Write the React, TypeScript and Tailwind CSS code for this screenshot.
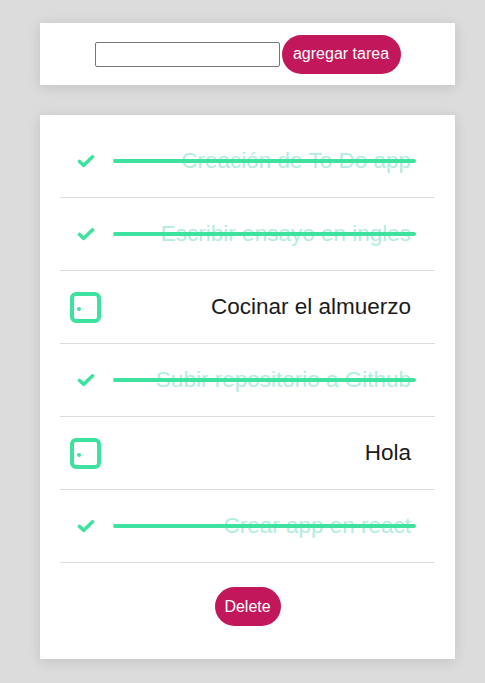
import React from 'react';

const tasks: { text: string, done: boolean }[] = [
  { text: 'Creación de To Do app', done: true },
  { text: 'Escribir ensayo en ingles', done: true },
  { text: 'Cocinar el almuerzo', done: false },
  { text: 'Subir repositorio a Github', done: true },
  { text: 'Hola', done: false },
  { text: 'Crear app en react', done: true },
]

const Check = () => (
  <svg width="18" height="14" viewBox="0 0 18 14" fill="none">
    <path d="M2.5 7.5 L6.8 11.3 L15.5 2.8" stroke="#3ee29f" strokeWidth="3.6" strokeLinecap="round" strokeLinejoin="round" />
  </svg>
)

const Box = () => (
  <div className="relative w-[31px] h-[31px] rounded-[6px] border-[4px] border-[#3ee29f]">
    <span className="absolute left-[3px] top-[11px] w-[4px] h-[4px] rounded-full bg-[#3ee29f]"></span>
  </div>
)

const App = () => {
  return (
    <div className="min-h-screen bg-[#dcdcdc] pt-[23px] pb-6 font-['Liberation_Sans',Arial,sans-serif]">
      <div className="ml-[40px] w-[415px] h-[62px] bg-white shadow-[0_2px_12px_rgba(0,0,0,0.12)] flex items-center justify-center gap-[2px]">
        <input type="text" className="w-[185px] h-[25px] border border-[#767676] rounded-[2px] bg-white" />
        <button className="w-[119px] h-[39px] rounded-full bg-[#c2185b] text-white text-[16px]">agregar tarea</button>
      </div>

      <div className="ml-[40px] w-[415px] mt-[30px] h-[544px] bg-white shadow-[0_2px_12px_rgba(0,0,0,0.12)] px-[20px] pt-[10px]">
        <ul>
          {tasks.map(({ text, done }, index: number) => (
            <li key={index + '' + text} className="h-[73px] border-b border-[#dddddd] flex items-center">
              <div className="w-[31px] ml-[10px] flex items-center justify-center">
                {done ? <Check /> : <Box />}
              </div>
              <div className="relative flex-1 h-full flex items-center justify-end pr-[24px]">
                <span className={done ? 'text-[22.5px] text-[#b3ece0]' : 'text-[22.5px] text-[#1a1a1a]'}>{text}</span>
                {done && (
                  <span className="absolute left-[12px] right-[19px] top-[34px] h-[4px] rounded-full bg-[#3ee29f]"></span>
                )}
              </div>
            </li>
          ))}
        </ul>
        <div className="flex justify-center pt-[24px]">
          <button className="w-[66px] h-[39px] rounded-full bg-[#c2185b] text-white text-[16px]">Delete</button>
        </div>
      </div>
    </div>
  );
};

export default App;
